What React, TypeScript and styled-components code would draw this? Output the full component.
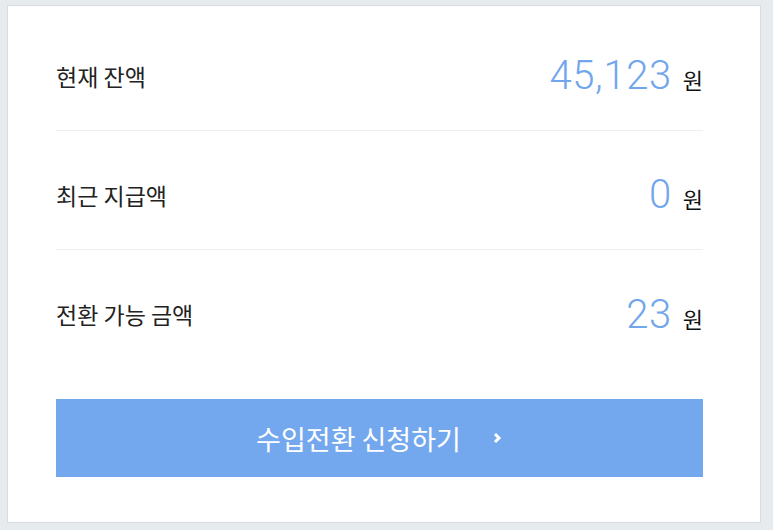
import React from 'react';
import styled, { createGlobalStyle } from "styled-components";

const GlobalStyle = createGlobalStyle`
  body {
    margin: 0;
    background-color: #e8ebee;
    font-family: "Noto Sans CJK KR", "Noto Sans", sans-serif;
  }
`;

const Page = styled.div`
  width: 773px;
  height: 530px;
  padding: 5px 0 0 7px;
  box-sizing: border-box;
`;

const Card = styled.section`
  width: 754px;
  box-sizing: border-box;
  background: #ffffff;
  border: 1px solid #d8dce1;
  padding: 6px 57px 45px 48px;
`;

const Row = styled.div<{ $last?: boolean }>`
  display: flex;
  justify-content: space-between;
  align-items: center;
  height: 119px;
  box-sizing: border-box;
  padding: 54px 0 41px;
  border-bottom: ${(p) => (p.$last ? "none" : "1px solid #eef0f2")};
`;

const Label = styled.span`
  font-size: 23px;
  line-height: 24px;
  padding-bottom: 4px;
  color: #222222;
`;

const Value = styled.div`
  display: flex;
  align-items: baseline;
  gap: 11px;
  line-height: 24px;
`;

const Amount = styled.span`
  font-family: Roboto, "Liberation Sans", sans-serif;
  font-weight: 300;
  font-size: 40px;
  letter-spacing: 0.6px;
  color: #71a6ec;
`;

const Unit = styled.span`
  font-size: 22px;
  color: #111111;
`;

const ApplyButton = styled.button`
  margin-top: 30px;
  width: 100%;
  height: 78px;
  border: none;
  background: #74a8ee;
  color: #ffffff;
  font-family: "Noto Sans CJK KR", sans-serif;
  font-size: 27px;
  display: flex;
  justify-content: center;
  align-items: center;
  gap: 30px;
  cursor: pointer;
  padding: 0;
`;

const Chevron = () => (
  <svg width="12" height="14" viewBox="0 0 12 14">
    <polyline points="4,3 8,7 4,11" fill="none" stroke="#fff" strokeWidth="3" />
  </svg>
);

const rows = [
  { label: "현재 잔액", amount: "45,123" },
  { label: "최근 지급액", amount: "0" },
  { label: "전환 가능 금액", amount: "23" },
];

export default function App() {
  return (
    <Page>
      <GlobalStyle />
      <Card>
        {rows.map((r, i) => (
          <Row key={r.label} $last={i === rows.length - 1}>
            <Label>{r.label}</Label>
            <Value>
              <Amount>{r.amount}</Amount>
              <Unit>원</Unit>
            </Value>
          </Row>
        ))}
        <ApplyButton>
          <span>수입전환 신청하기</span>
          <Chevron />
        </ApplyButton>
      </Card>
    </Page>
  );
}
